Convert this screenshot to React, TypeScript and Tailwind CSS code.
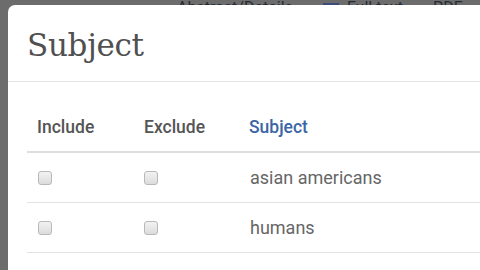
import React from 'react';

const rows = ['asian americans', 'humans', 'aged'];

const Box = () => (
  <span className="block w-[14px] h-[14px] rounded-[3px] border border-[#b9b9b9] bg-gradient-to-b from-[#f2f2f2] to-[#dcdcdc]" />
);

export default function App() {
  return (
    <div className="w-[480px] h-[270px] overflow-hidden bg-[#6c6c6c] font-['Roboto',sans-serif]">
      <div className="h-[5px] overflow-hidden flex items-end">
        <div className="flex items-center gap-[30px] pl-[177px] text-[16px] leading-[16px] text-[#262b33] translate-y-[11px] whitespace-nowrap">
          <span>Abstract/Details</span>
          <span className="flex items-center gap-2">
            <span className="w-[16px] h-[10px] bg-[#3b4c7a]" />
            <span>Full text</span>
          </span>
          <span>PDF</span>
        </div>
      </div>
      <div className="ml-[8px] w-[500px] h-[300px] bg-white rounded-tl-[7px]">
        <div className="h-[77px] border-b border-[#e5e5e5] pl-[19px] pt-[20px]">
          <h1 className="font-['DejaVu_Serif',serif] text-[31px] leading-[40px] text-[#505050] tracking-[-0.3px]">Subject</h1>
        </div>
        <div className="pl-[19px] pt-[22px]">
          <div className="flex items-center h-[49px] border-b-2 border-[#dedede] text-[17.5px] font-medium">
            <div className="w-[117px] pl-[10px] text-[#555]">Include</div>
            <div className="w-[105px] text-[#555]">Exclude</div>
            <div className="text-[#3b65a5]">Subject</div>
          </div>
          {rows.map((r) => (
            <div key={r} className="flex items-center h-[50px] border-b border-[#e3e3e3] text-[18px] text-[#666]">
              <div className="w-[117px] pl-[11px]"><Box /></div>
              <div className="w-[106px]"><Box /></div>
              <div>{r}</div>
            </div>
          ))}
        </div>
      </div>
    </div>
  );
}
